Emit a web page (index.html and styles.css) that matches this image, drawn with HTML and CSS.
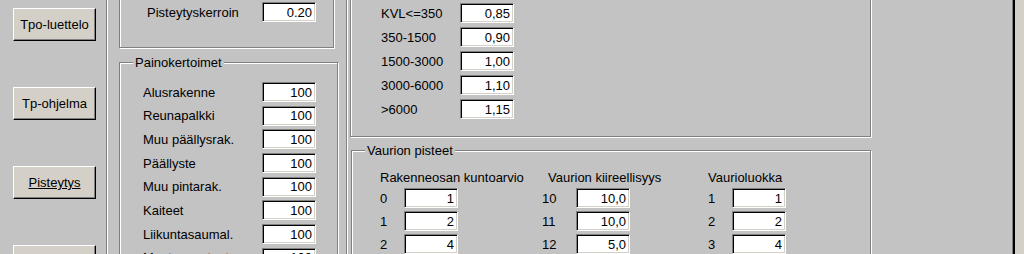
FILE: index.html
```html
<!DOCTYPE html>
<html lang="fi">
<head>
    <meta charset="UTF-8">
    <title>Pisteytys</title>
    <link rel="stylesheet" href="styles.css">
</head>
<body>
    <div class="window">
        <div class="sidebar">
            <button class="btn">Tpo-luettelo</button>
            <button class="btn">Tp-ohjelma</button>
            <button class="btn btn-current">Pisteytys</button>
            <button class="btn">&nbsp;</button>
        </div>

        <div class="col-left">
            <div class="group group-factor">
                <div class="row">
                    <span class="lbl lbl-factor">Pisteytyskerroin</span>
                    <input class="field" type="text" value="0.20" readonly>
                </div>
            </div>

            <div class="group group-weights">
                <span class="group-title">Painokertoimet</span>
                <div class="rows rows-weights">
                    <div class="row"><span class="lbl lbl-weight">Alusrakenne</span><input class="field" type="text" value="100" readonly></div>
                    <div class="row"><span class="lbl lbl-weight">Reunapalkki</span><input class="field" type="text" value="100" readonly></div>
                    <div class="row"><span class="lbl lbl-weight">Muu päällysrak.</span><input class="field" type="text" value="100" readonly></div>
                    <div class="row"><span class="lbl lbl-weight">Päällyste</span><input class="field" type="text" value="100" readonly></div>
                    <div class="row"><span class="lbl lbl-weight">Muu pintarak.</span><input class="field" type="text" value="100" readonly></div>
                    <div class="row"><span class="lbl lbl-weight">Kaiteet</span><input class="field" type="text" value="100" readonly></div>
                    <div class="row"><span class="lbl lbl-weight">Liikuntasaumal.</span><input class="field" type="text" value="100" readonly></div>
                    <div class="row"><span class="lbl lbl-weight">Muut varusteet</span><input class="field" type="text" value="100" readonly></div>
                </div>
            </div>
        </div>

        <div class="col-right">
            <div class="group group-kvl">
                <div class="rows rows-kvl">
                    <div class="row"><span class="lbl lbl-kvl">KVL&lt;=350</span><input class="field" type="text" value="0,85" readonly></div>
                    <div class="row"><span class="lbl lbl-kvl">350-1500</span><input class="field" type="text" value="0,90" readonly></div>
                    <div class="row"><span class="lbl lbl-kvl">1500-3000</span><input class="field" type="text" value="1,00" readonly></div>
                    <div class="row"><span class="lbl lbl-kvl">3000-6000</span><input class="field" type="text" value="1,10" readonly></div>
                    <div class="row"><span class="lbl lbl-kvl">&gt;6000</span><input class="field" type="text" value="1,15" readonly></div>
                </div>
            </div>

            <div class="group group-damage">
                <span class="group-title">Vaurion pisteet</span>
                <div class="damage-grid">
                    <div class="head">Rakenneosan kuntoarvio</div>
                    <div class="head head-urgency">Vaurion kiireellisyys</div>
                    <div class="head">Vaurioluokka</div>

                    <div class="pair"><span class="num">0</span><input class="field" type="text" value="1" readonly></div>
                    <div class="pair"><span class="num num-wide">10</span><input class="field" type="text" value="10,0" readonly></div>
                    <div class="pair"><span class="num">1</span><input class="field" type="text" value="1" readonly></div>

                    <div class="pair"><span class="num">1</span><input class="field" type="text" value="2" readonly></div>
                    <div class="pair"><span class="num num-wide">11</span><input class="field" type="text" value="10,0" readonly></div>
                    <div class="pair"><span class="num">2</span><input class="field" type="text" value="2" readonly></div>

                    <div class="pair"><span class="num">2</span><input class="field" type="text" value="4" readonly></div>
                    <div class="pair"><span class="num num-wide">12</span><input class="field" type="text" value="5,0" readonly></div>
                    <div class="pair"><span class="num">3</span><input class="field" type="text" value="4" readonly></div>
                </div>
            </div>
        </div>

        <div class="edge"></div>
    </div>
</body>
</html>
```

FILE: styles.css
```css
body {
    margin: 0;
    background: #c3c3c3;
    font: 13px/15px "Liberation Sans", Arial, sans-serif;
    color: #000;
    overflow: hidden;
}
.window {
    display: flex;
    height: 254px;
    overflow: hidden;
}

/* left button bar */
.sidebar {
    flex: none;
    width: 107px;
    box-sizing: border-box;
    padding: 8px 0 0 13px;
    border-right: 1px solid #808080;
    box-shadow: 1px 0 0 #fff;
    display: flex;
    flex-direction: column;
    gap: 46px;
}
.btn {
    flex: none;
    width: 83px;
    height: 33px;
    padding: 0;
    font: inherit;
    color: #000;
    background: #d4d0c8;
    border: 1px solid;
    border-color: #fff #000 #000 #fff;
    box-shadow: inset -1px -1px 0 #808080;
}
.btn-current {
    text-decoration: underline;
}

/* group boxes */
.group {
    position: relative;
    box-sizing: border-box;
    border: 1px solid #808080;
    box-shadow: inset 1px 1px 0 #fff, 1px 1px 0 #fff;
}
.group-title {
    position: absolute;
    top: -8px;
    left: 13px;
    padding: 0 2px;
    background: #c3c3c3;
}
.rows {
    display: flex;
    flex-direction: column;
}
.row {
    display: flex;
    align-items: center;
    height: 20px;
}
.lbl {
    flex: none;
}

/* sunken edit field */
.field {
    box-sizing: border-box;
    flex: none;
    width: 54px;
    height: 20px;
    margin: 0;
    padding: 0 3px 0 2px;
    font: inherit;
    color: #000;
    text-align: right;
    background: #fff;
    border: 1px solid;
    border-color: #808080 #fff #fff #808080;
    box-shadow: inset 1px 1px 0 #000, inset -1px -1px 0 #d4d0c8;
    outline: none;
}

/* left column */
.col-left {
    flex: none;
    width: 240px;
    box-sizing: border-box;
    padding-left: 12px;
    border-right: 1px solid #808080;
    box-shadow: 1px 0 0 #fff;
}
.group-factor {
    width: 215px;
    height: 78px;
    margin-top: -30px;
    padding: 31px 0 0 27px;
}
.lbl-factor {
    width: 115px;
}
.group-weights {
    width: 219px;
    height: 240px;
    margin-top: 14px;
    padding: 19px 0 0 23px;
}
.rows-weights {
    gap: 3.7px;
}
.lbl-weight {
    width: 119px;
}

/* right column */
.col-right {
    flex: 1;
    padding-left: 3px;
}
.group-kvl {
    width: 521px;
    margin-top: -30px;
    padding: 32px 0 17px 30px;
}
.rows-kvl {
    gap: 4px;
}
.lbl-kvl {
    width: 79px;
}
.group-damage {
    width: 520px;
    height: 120px;
    margin: 13px 0 0 1px;
    padding: 19px 0 0 28px;
}
.damage-grid {
    display: grid;
    grid-template-columns: 162px 166px auto;
    grid-auto-rows: 20px;
    grid-template-rows: 15px;
    row-gap: 3px;
}
.head {
    margin-bottom: 1px;
}
.head-urgency {
    margin-left: 6px;
}
.pair {
    display: flex;
    align-items: center;
}
.num {
    width: 24px;
}
.num-wide {
    width: 34px;
}

/* window frame on the right */
.edge {
    flex: none;
    width: 12px;
    box-sizing: border-box;
    border-left: 1px solid #808080;
    box-shadow: inset 2px 0 0 #000;
    background: #d4d0c8;
}
```
